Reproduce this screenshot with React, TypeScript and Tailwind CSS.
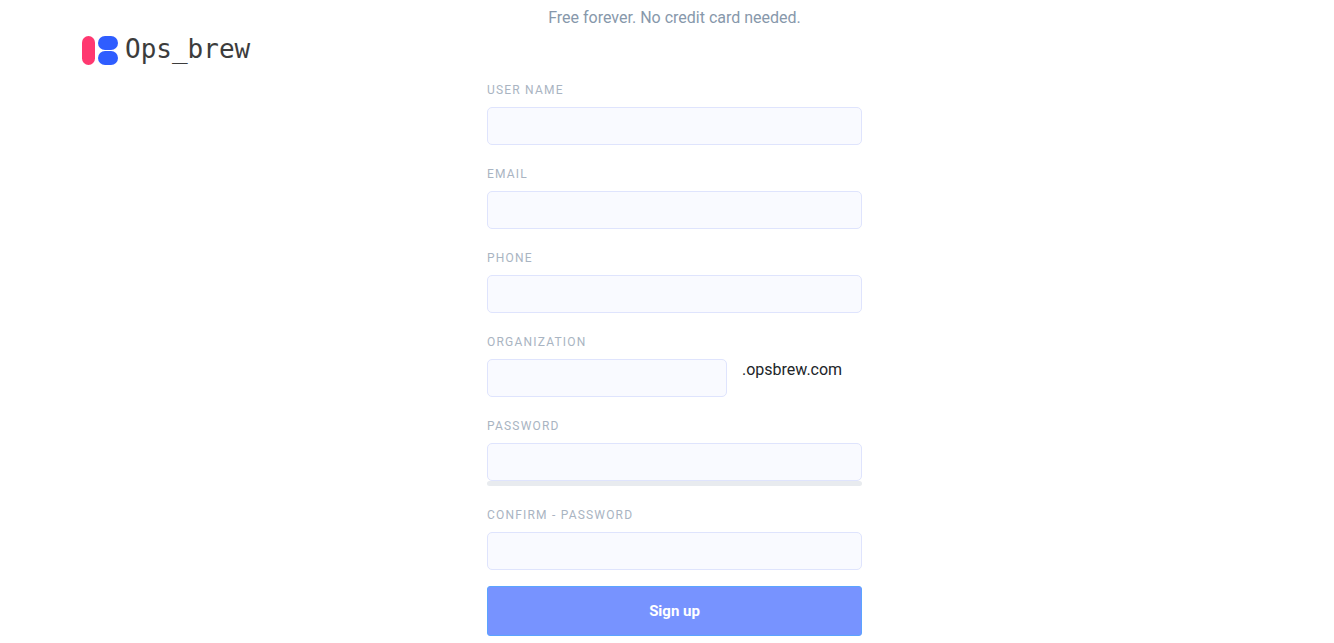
import type { ReactNode } from "react";

const inputClass =
  "h-[38px] w-full rounded-[5px] border border-[#dfe4fd] bg-[#f9faff] px-3 text-[15px] text-gray-800 outline-none focus:border-[#7793ff]";

function Field({ id, label, children }: { id: string; label: string; children: ReactNode }) {
  return (
    <div className="flex flex-col gap-2">
      <label htmlFor={id} className="text-[12px] leading-[18px] tracking-widest text-[#a9b4c2] uppercase">
        {label}
      </label>
      {children}
    </div>
  );
}

function Logo() {
  return (
    <a href="#" className="flex items-center gap-[7px]">
      <svg width="36" height="29" viewBox="0 0 36 29" aria-hidden="true">
        <rect x="0" y="0" width="13" height="29" rx="6.5" fill="#ff3870" />
        <rect x="16" y="0" width="20" height="14" rx="7" fill="#2f5dff" />
        <rect x="16" y="15" width="20" height="14" rx="7" fill="#2f5dff" />
      </svg>
      <span className="pb-[2px] font-['DejaVu_Sans_Mono',monospace] text-[26px] leading-[28px] text-[#3c3c3c]">Ops_brew</span>
    </a>
  );
}

export default function App() {
  return (
    <div className="grid grid-cols-[1fr_minmax(0,375px)_1fr] items-start bg-white pr-[67px] pl-[82px] font-[Roboto,sans-serif]">
      <header className="flex pt-[35px]">
        <Logo />
      </header>
      <main>
        <p className="pt-2 text-center text-[16px] leading-5 text-[#8798ab]">Free forever. No credit card needed.</p>
        <form className="flex flex-col gap-5 pt-[53px]" onSubmit={(e) => e.preventDefault()}>
          <Field id="username" label="User name">
            <input id="username" type="text" className={inputClass} />
          </Field>
          <Field id="email" label="Email">
            <input id="email" type="email" className={inputClass} />
          </Field>
          <Field id="phone" label="Phone">
            <input id="phone" type="tel" className={inputClass} />
          </Field>
          <Field id="organization" label="Organization">
            <div className="flex gap-[15px]">
              <div className="w-[64%]">
                <input id="organization" type="text" className={inputClass} />
              </div>
              <span className="text-[16px] leading-[22px] text-[#212529]">.opsbrew.com</span>
            </div>
          </Field>
          <Field id="password" label="Password">
            <div>
              <input id="password" type="password" className={`${inputClass} block`} />
              <div className="h-[5px] rounded-sm bg-[#e8ebef]" />
            </div>
          </Field>
          <Field id="confirm" label="Confirm - password">
            <input id="confirm" type="password" className={inputClass} />
          </Field>
          <button
            type="submit"
            className="-mt-1 h-[50px] w-full rounded-[3px] border border-[#5ba4ff] bg-[#7793ff] text-[15px] font-bold text-white"
          >
            Sign up
          </button>
        </form>
      </main>
    </div>
  );
}
